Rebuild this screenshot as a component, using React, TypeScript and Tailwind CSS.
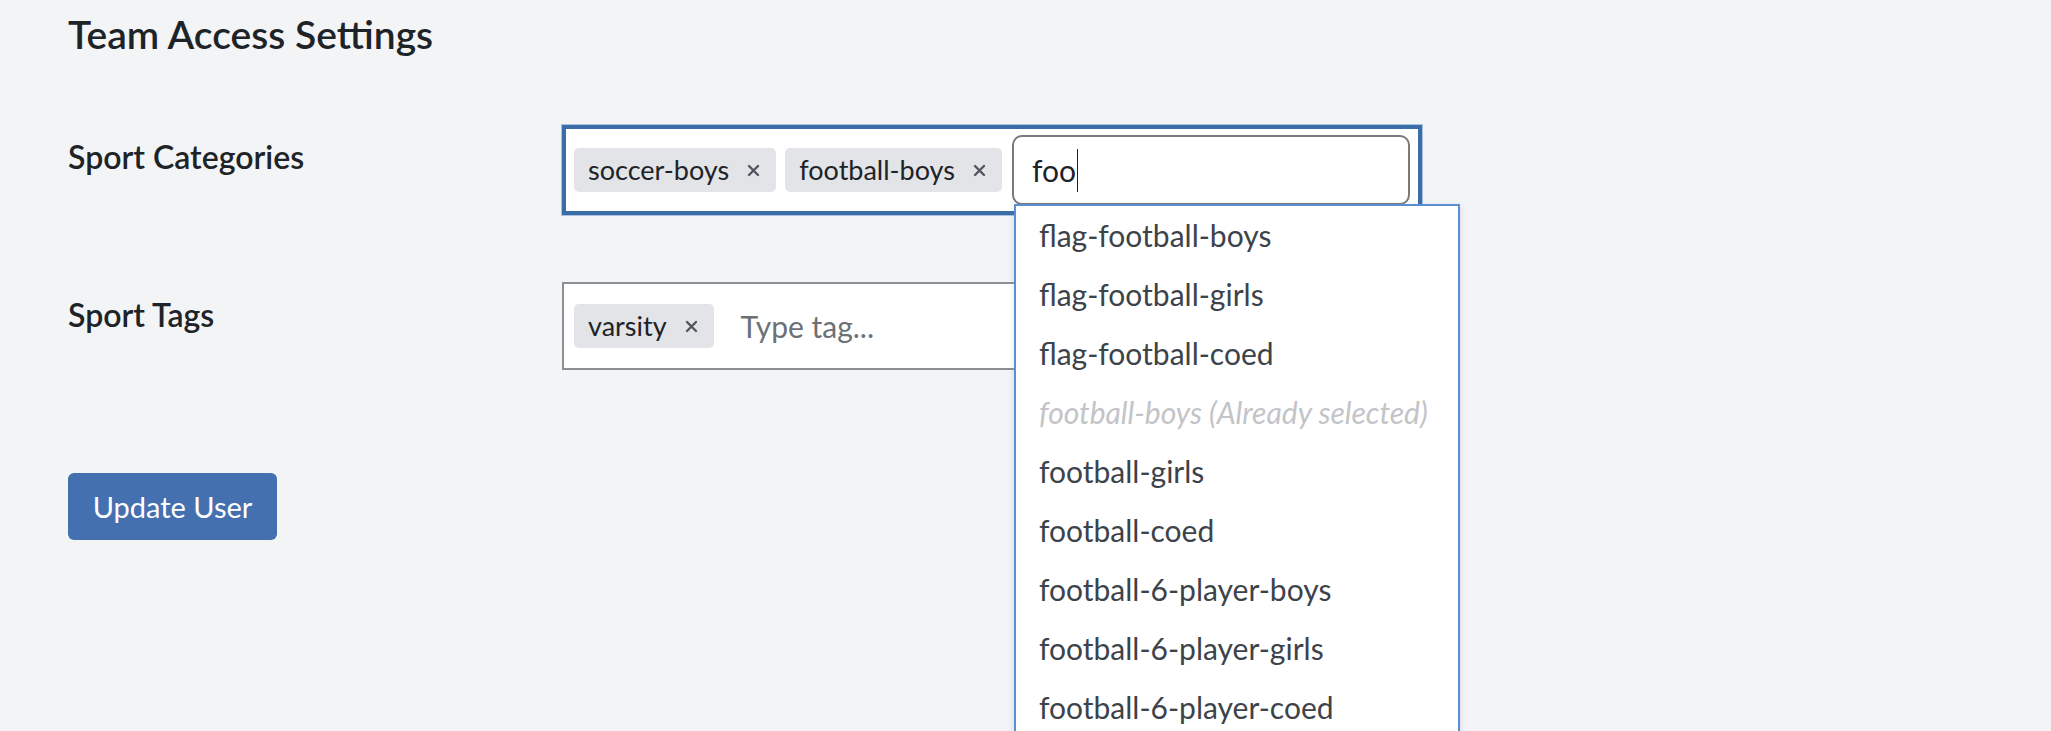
const categoryChips = ["soccer-boys", "football-boys"];

const suggestions = [
  { name: "flag-football-boys" },
  { name: "flag-football-girls" },
  { name: "flag-football-coed" },
  { name: "football-boys (Already selected)", disabled: true },
  { name: "football-girls" },
  { name: "football-coed" },
  { name: "football-6-player-boys" },
  { name: "football-6-player-girls" },
  { name: "football-6-player-coed" },
];

const RemoveIcon = () => (
  <svg width="13" height="13" viewBox="0 0 13 13" className="shrink-0">
    <path d="M2 2 L11 11 M11 2 L2 11" stroke="#50575e" strokeWidth="2.4" strokeLinecap="round" />
  </svg>
);

const Chip = ({ label }: { label: string }) => (
  <span className="flex h-[44px] shrink-0 items-center gap-[18px] rounded-[5px] bg-[#e2e4e7] pl-[14px] pr-[16px] text-[27px] text-[#1d2327]">
    {label}
    <RemoveIcon />
  </span>
);

export default function App() {
  return (
    <div
      className="h-[731px] overflow-hidden bg-[#f3f4f6] pl-[68px] pt-[10px] text-[#1d2327]"
      style={{ fontFamily: "Lato, 'Liberation Sans', sans-serif" }}
    >
      <h2 className="text-[39px] font-semibold leading-[48px]">Team Access Settings</h2>

      {/* categories */}
      <div className="mt-[67px] flex items-start">
        <div className="mt-[12px] w-[494px] shrink-0 text-[32px] font-semibold leading-[40px]">
          Sport Categories
        </div>
        <div className="flex w-[860px] items-center gap-[9px] border-[4px] border-[#3b6ea8] bg-white px-[8px] py-[6px] shadow-[0_0_0_1px_#a9c1dd]">
          {categoryChips.map((c) => (
            <Chip key={c} label={c} />
          ))}
          <div className="relative ml-px flex-1">
            <div className="flex h-[70px] items-center rounded-[10px] border-2 border-[#7a7a7a] pl-[18px] text-[30px] text-[#1d2327]">
              foo
              <span className="ml-px h-[43px] w-px bg-[#1d2327]" />
            </div>
            <ul className="absolute left-[2px] top-[69px] z-10 w-[446px] border-2 border-[#5b8fd0] bg-white shadow-[0_2px_6px_rgba(91,143,208,0.25)]">
              {suggestions.map((s) => (
                <li
                  key={s.name}
                  className={
                    s.disabled
                      ? "h-[59px] pl-[23px] text-[30px] italic leading-[59px] text-[#c3c4c7]"
                      : "h-[59px] pl-[23px] text-[30px] leading-[59px] text-[#3c434a]"
                  }
                >
                  {s.name}
                </li>
              ))}
            </ul>
          </div>
        </div>
      </div>

      {/* tags */}
      <div className="mt-[67px] flex items-start">
        <div className="mt-[13px] w-[494px] shrink-0 text-[32px] font-semibold leading-[40px]">
          Sport Tags
        </div>
        <div className="flex h-[88px] w-[860px] items-center border-2 border-[#8c8f94] bg-white pl-[10px]">
          <Chip label="varsity" />
          <span className="ml-[27px] text-[30px] text-[#6b7177]">Type tag...</span>
        </div>
      </div>

      <button className="mt-[103px] flex h-[67px] w-[209px] items-center justify-center rounded-[6px] bg-[#4470af] text-[29px] text-white">
        Update User
      </button>
    </div>
  );
}
